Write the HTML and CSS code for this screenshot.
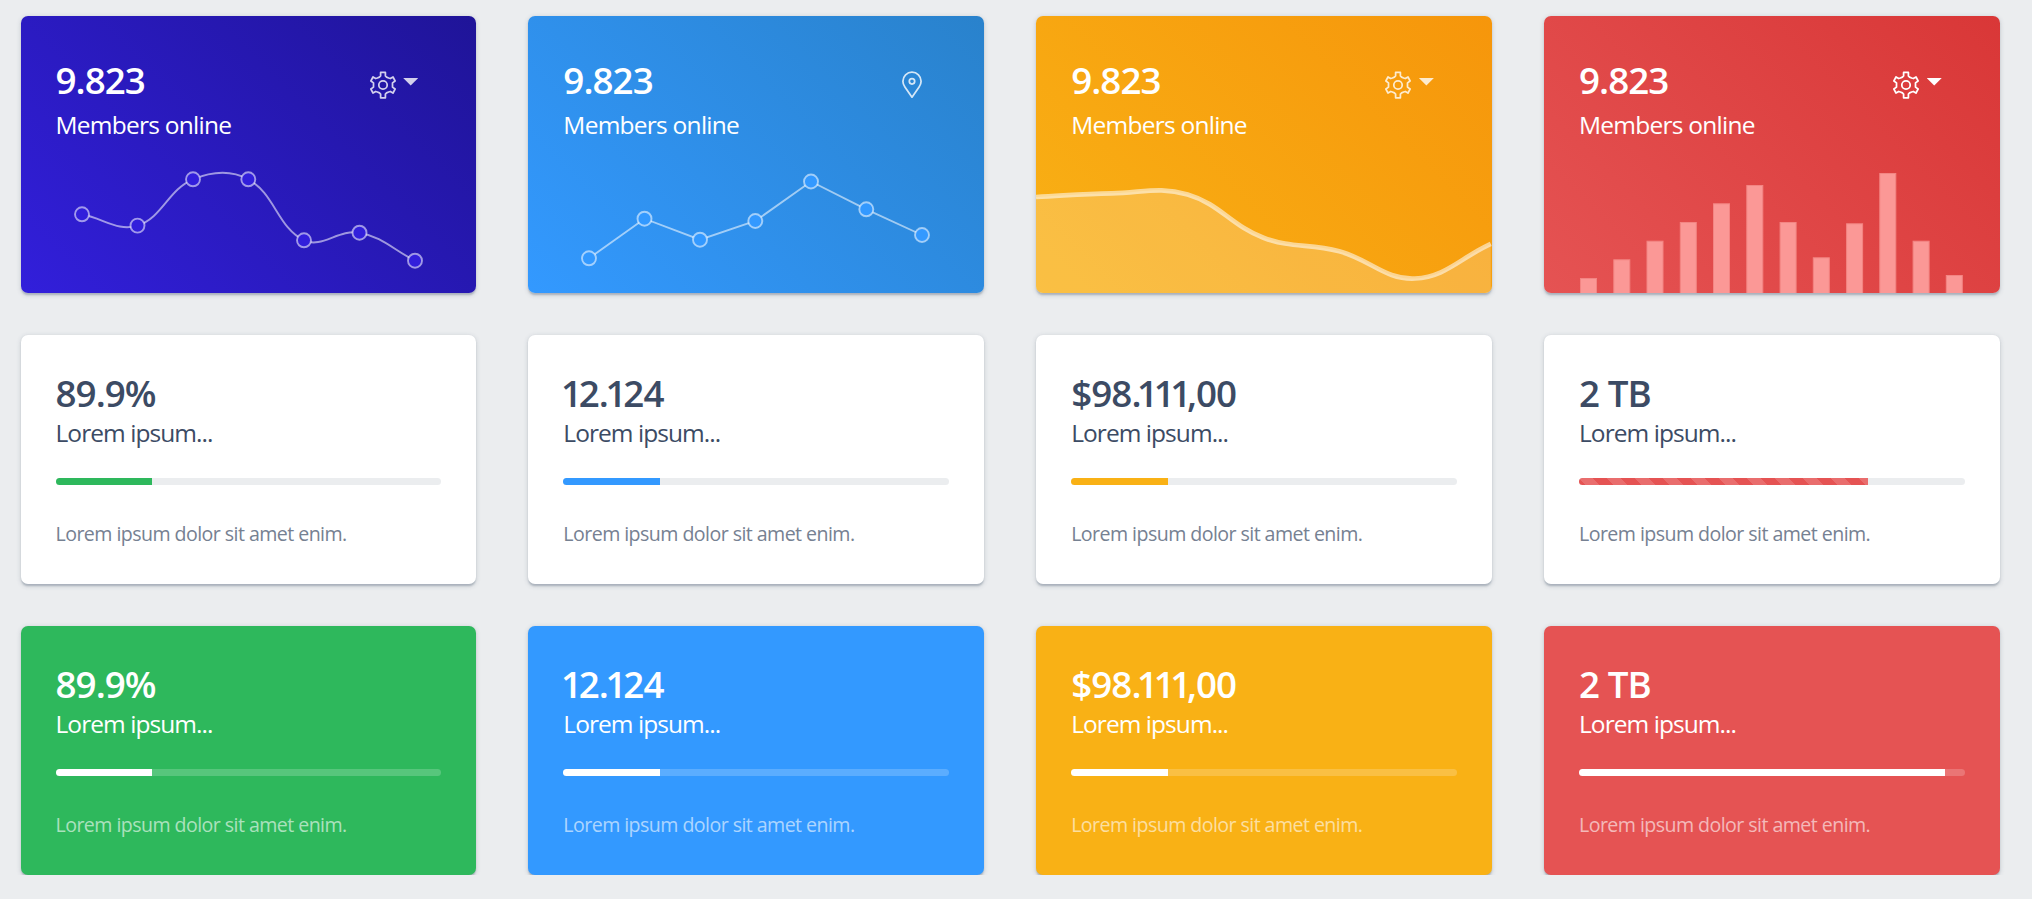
FILE: index.html
```html
<!DOCTYPE html>
<html lang="en">
<head>
<meta charset="utf-8">
<title>Widgets</title>
<link rel="stylesheet" href="styles.css">
</head>
<body>
<svg class="defs" aria-hidden="true">
  <symbol id="gear" viewBox="0 0 26 28">
    <path d="M10.6 1.4h4.8v3.5l1.2 1.2 2 .9 1.7.5 2.7-1.6 2.1 4.1-2.6 1.9v4.2l2.6 1.9-2.1 4.1-2.7-1.6-1.7.5-2 .9-1.2 1.2v3.7h-4.8v-3.7l-1.2-1.2-2-.9-1.7-.5-2.7 1.6-2.1-4.1 2.6-1.9v-4.2l-2.6-1.9 2.1-4.1 2.7 1.6 1.7-.5 2-.9 1.2-1.2z"/>
    <circle cx="13" cy="14" r="4.2"/>
  </symbol>
  <symbol id="pin" viewBox="0 0 20 28">
    <path d="M10 26.2 2.9 15.9C1.5 13.9.9 12.4.9 10.2a9.1 9.1 0 0 1 18.2 0c0 2.2-.6 3.7-2 5.7z"/>
    <circle cx="10" cy="10.3" r="2.7"/>
  </symbol>
</svg>
<main class="grid">
  <section class="card stat primary">
    <header class="head"><div><div class="value">9.823</div><div class="label">Members online</div></div>
      <div class="tools"><svg class="gear"><use href="#gear"/></svg><span class="caret"></span></div></header>
    <svg class="chart" viewBox="21 153 456 140">
      <path class="line" d="M82 214.3C104.2 218.8 118 231.8 137.5 225.6C162.4 217.8 167.9 189.8 193 179.3C212.2 171.3 230.5 169.5 248.3 179.3C274.9 193.9 277.5 227.6 304 240.3C322 248.9 338.5 228.8 359.5 232.7C382.9 237 392.8 249.5 415 260.7"/>
      <g class="dots"><circle cx="82" cy="214.3" r="7"/><circle cx="137.5" cy="225.6" r="7"/><circle cx="193" cy="179.3" r="7"/><circle cx="248.3" cy="179.3" r="7"/><circle cx="304" cy="240.3" r="7"/><circle cx="359.5" cy="232.7" r="7"/><circle cx="415" cy="260.7" r="7"/></g>
    </svg>
  </section>
  <section class="card stat info">
    <header class="head"><div><div class="value">9.823</div><div class="label">Members online</div></div>
      <div class="tools"><svg class="pin"><use href="#pin"/></svg></div></header>
    <svg class="chart" viewBox="528 153 456 140">
      <path class="line" d="M589 258.3 644.5 218.7 700 239.7 755.3 221 811 181.5 866.3 209.3 922 235"/>
      <g class="dots"><circle cx="589" cy="258.3" r="7"/><circle cx="644.5" cy="218.7" r="7"/><circle cx="700" cy="239.7" r="7"/><circle cx="755.3" cy="221" r="7"/><circle cx="811" cy="181.5" r="7"/><circle cx="866.3" cy="209.3" r="7"/><circle cx="922" cy="235" r="7"/></g>
    </svg>
  </section>
  <section class="card stat warning">
    <header class="head"><div><div class="value">9.823</div><div class="label">Members online</div></div>
      <div class="tools"><svg class="gear"><use href="#gear"/></svg><span class="caret"></span></div></header>
    <svg class="chart" viewBox="1036 153 456 140">
      <path class="area" d="M1036 197C1066.3 195.5 1081.5 193.8 1111.8 193.3C1142.1 192.8 1159.4 186.2 1187.6 194.5C1220 204 1231.2 225.6 1263.4 237.7C1291.8 248.4 1309.5 243.3 1339.2 251.3C1370.2 259.6 1385.2 280 1415 278.5C1445.8 277 1460.5 257.7 1490.8 243.9V294H1036z"/>
      <path class="line thick" d="M1036 197C1066.3 195.5 1081.5 193.8 1111.8 193.3C1142.1 192.8 1159.4 186.2 1187.6 194.5C1220 204 1231.2 225.6 1263.4 237.7C1291.8 248.4 1309.5 243.3 1339.2 251.3C1370.2 259.6 1385.2 280 1415 278.5C1445.8 277 1460.5 257.7 1490.8 243.9"/>
    </svg>
  </section>
  <section class="card stat danger">
    <header class="head"><div><div class="value">9.823</div><div class="label">Members online</div></div>
      <div class="tools solid"><svg class="gear"><use href="#gear"/></svg><span class="caret"></span></div></header>
    <svg class="chart" viewBox="1544 153 456 140">
      <g class="bars"><rect x="1580.5" y="278.5" width="16" height="20"/><rect x="1613.8" y="259.8" width="16" height="40"/><rect x="1647" y="241.2" width="16" height="60"/><rect x="1680.3" y="222.5" width="16" height="80"/><rect x="1713.5" y="203.8" width="16" height="100"/><rect x="1746.8" y="185.5" width="16" height="120"/><rect x="1780.1" y="222.5" width="16" height="80"/><rect x="1813.3" y="257.8" width="16" height="40"/><rect x="1846.6" y="223.8" width="16" height="80"/><rect x="1879.8" y="173.5" width="16" height="130"/><rect x="1913.1" y="241.2" width="16" height="60"/><rect x="1946.3" y="275.5" width="16" height="30"/></g>
    </svg>
  </section>

  <section class="card plain"><div class="value">89.9%</div><div class="label">Lorem ipsum...</div><div class="track"><div class="fill green" style="width:25%"></div></div><div class="note">Lorem ipsum dolor sit amet enim.</div></section>
  <section class="card plain"><div class="value lead"><span class="tight">1</span>2<span class="tight">.1</span>24</div><div class="label">Lorem ipsum...</div><div class="track"><div class="fill blue" style="width:25%"></div></div><div class="note">Lorem ipsum dolor sit amet enim.</div></section>
  <section class="card plain"><div class="value">$98<span class="tighter">.111</span>,00</div><div class="label">Lorem ipsum...</div><div class="track"><div class="fill yellow" style="width:25%"></div></div><div class="note">Lorem ipsum dolor sit amet enim.</div></section>
  <section class="card plain"><div class="value">2 TB</div><div class="label">Lorem ipsum...</div><div class="track"><div class="fill red striped" style="width:75%"></div></div><div class="note">Lorem ipsum dolor sit amet enim.</div></section>

  <section class="card plain inverse green"><div class="value">89.9%</div><div class="label">Lorem ipsum...</div><div class="track"><div class="fill" style="width:25%"></div></div><div class="note">Lorem ipsum dolor sit amet enim.</div></section>
  <section class="card plain inverse blue"><div class="value lead"><span class="tight">1</span>2<span class="tight">.1</span>24</div><div class="label">Lorem ipsum...</div><div class="track"><div class="fill" style="width:25%"></div></div><div class="note">Lorem ipsum dolor sit amet enim.</div></section>
  <section class="card plain inverse yellow"><div class="value">$98<span class="tighter">.111</span>,00</div><div class="label">Lorem ipsum...</div><div class="track"><div class="fill" style="width:25%"></div></div><div class="note">Lorem ipsum dolor sit amet enim.</div></section>
  <section class="card plain inverse red"><div class="value">2 TB</div><div class="label">Lorem ipsum...</div><div class="track"><div class="fill" style="width:95%"></div></div><div class="note">Lorem ipsum dolor sit amet enim.</div></section>
</main>
</body>
</html>
```
FILE: styles.css
```css
* { box-sizing: border-box; }
body { margin: 0; background: #ebedef; font-family: "Open Sans", "Noto Sans", sans-serif; color: #3c4b64; }
.defs { display: none; }
.grid { display: grid; grid-template-columns: repeat(4, 455.7px); grid-template-rows: 277px 249px 249px; gap: 42px 52.17px; padding: 16px 0 0 20.5px; }
.card { border-radius: 7px; background: #fff; display: flex; flex-direction: column; overflow: hidden;
  box-shadow: 0 1.75px 1.75px rgba(60,75,100,.14), 0 3.5px 1.75px -1.75px rgba(60,75,100,.12), 0 1.75px 5.25px rgba(60,75,100,.2); }
.stat { color: #fff; justify-content: space-between; }
.primary { background: linear-gradient(45deg, #321fdb, #1f1498); --dot: #321fdb; }
.info { background: linear-gradient(45deg, #39f, #2982cc); --dot: #39f; }
.warning { background: linear-gradient(45deg, #f9b115, #f6960b); }
.danger { background: linear-gradient(45deg, #e55353, #d93737); }
.head { display: flex; justify-content: space-between; padding: 43px 58px 0 35px; }
.value { font-weight: 600; font-size: 36.75px; line-height: 42px; letter-spacing: -.95px; white-space: nowrap; }
.lead { margin-left: -2.3px; }
.tight { letter-spacing: -3.3px; }
.tighter { letter-spacing: -4.4px; }
.label { font-size: 24.5px; line-height: 36px; letter-spacing: -.95px; white-space: nowrap; }
.stat .label { margin-top: 6px; letter-spacing: -.75px; }
.tools { display: flex; gap: 7.5px; padding-top: 12px; opacity: .8; }
.tools.solid { opacity: 1; }
.gear, .pin { fill: none; stroke: #fff; stroke-width: 1.75; stroke-linejoin: round; }
.gear { width: 26px; height: 28px; }
.pin { width: 20px; height: 28px; margin-right: 4px; }
.caret { width: 15px; height: 7.5px; margin-top: 7px; background: #fff; clip-path: polygon(0 0, 100% 0, 50% 100%); }
.chart { display: block; flex: none; width: 456px; height: 140px; }
.line { fill: none; stroke: rgba(255,255,255,.55); stroke-width: 1.9; }
.thick { stroke-width: 4.7; }
.dots { fill: var(--dot); stroke: rgba(255,255,255,.55); stroke-width: 1.9; }
.area { fill: rgba(255,255,255,.2); }
.bars { fill: #fb9896; stroke: #f38583; stroke-width: 1; }
.plain { padding: 37px 35px 0; }
.plain .label { margin-top: 1px; }
.track { height: 7px; margin: 27px 0 31px; border-radius: 3.5px; background: #ebedef; overflow: hidden; }
.fill { height: 7px; }
.note { font-size: 19.6px; line-height: 36px; letter-spacing: -.56px; color: #768192; white-space: nowrap; }
.green { background: #2eb85c; }
.blue { background: #39f; }
.yellow { background: #f9b115; }
.red { background-color: #e55353; }
.striped { background-image: linear-gradient(45deg, rgba(255,255,255,.15) 25%, transparent 25%, transparent 50%, rgba(255,255,255,.15) 50%, rgba(255,255,255,.15) 75%, transparent 75%, transparent); background-size: 28px 28px; }
.inverse { color: #fff; }
.inverse .track { background: rgba(255,255,255,.2); }
.inverse .fill { background: #fff; }
.inverse .note { color: rgba(255,255,255,.6); }
```
